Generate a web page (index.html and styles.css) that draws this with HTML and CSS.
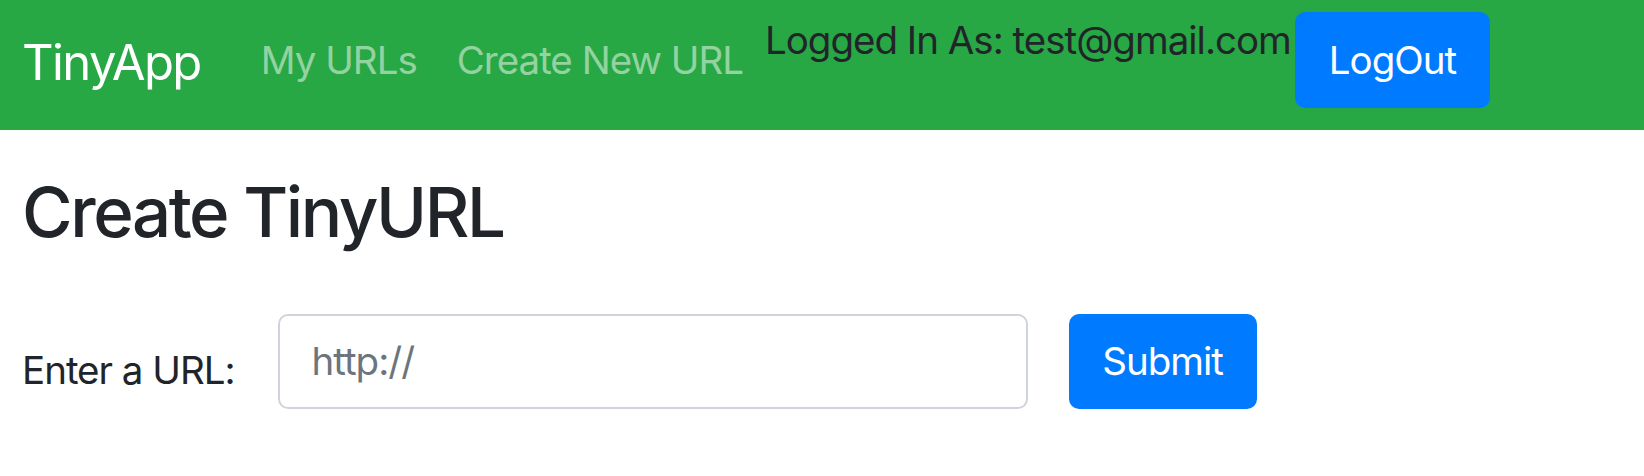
FILE: index.html
```html
<!DOCTYPE html>
<html lang="en">
<head>
<meta charset="utf-8">
<title>TinyApp</title>
<link rel="stylesheet" href="styles.css">
</head>
<body>
<nav class="navbar">
  <a class="brand" href="#">TinyApp</a>
  <ul class="nav-links">
    <li><a class="nav-link" href="#">My URLs</a></li>
    <li><a class="nav-link" href="#">Create New URL</a></li>
  </ul>
  <span class="logged">Logged In As: test@gmail.com</span>
  <button class="btn btn-logout" type="button">LogOut</button>
</nav>
<main class="main">
  <h3 class="title">Create TinyURL</h3>
  <form class="url-form">
    <label class="url-label" for="longURL">Enter a URL:</label>
    <input class="url-input" id="longURL" type="text" placeholder="http://">
    <button class="btn btn-submit" type="button">Submit</button>
  </form>
</main>
</body>
</html>
```

FILE: styles.css
```css
* { box-sizing: border-box; }
html, body { margin: 0; padding: 0; }
body {
  font-family: Inter, "Noto Sans", "Liberation Sans", sans-serif;
  color: #212529;
  background: #fff;
  font-size: 38.5px;
  line-height: 1;
  letter-spacing: -0.026em;
}
.navbar {
  height: 130px;
  background: #28a745;
  display: flex;
  align-items: flex-start;
  padding-left: 22px;
}
.brand {
  font-size: 49px;
  letter-spacing: -0.032em;
  line-height: 1;
  color: #fff;
  text-decoration: none;
  margin-top: 37.7px;
  margin-right: 40px;
}
.nav-links {
  list-style: none;
  margin: 40.7px 0 0 0;
  padding: 0;
  display: flex;
}
.nav-link {
  display: block;
  padding: 0 20px;
  color: rgba(255, 255, 255, 0.5);
  text-decoration: none;
  line-height: 1;
}
.logged {
  margin-top: 20.7px;
  margin-left: 2px;
  color: #212529;
}
.btn {
  font-family: inherit;
  font-size: 38.5px;
  letter-spacing: -0.026em;
  line-height: 1;
  color: #fff;
  background: #007bff;
  border: 0;
  border-radius: 10px;
  cursor: pointer;
}
.btn-logout {
  margin-top: 12px;
  margin-left: 4px;
  height: 96px;
  padding: 0 34px;
}
.main {
  padding-left: 22px;
}
.title {
  font-size: 69px;
  font-weight: 500;
  letter-spacing: -0.035em;
  line-height: 1;
  margin: 48.4px 0 66.6px 0;
}
.url-form {
  display: flex;
  align-items: flex-start;
}
.url-label {
  margin-top: 36.7px;
  margin-right: 43px;
}
.url-input {
  width: 750px;
  height: 95px;
  border: 2px solid #ced4da;
  border-radius: 10px;
  padding: 0 32px;
  font-family: inherit;
  font-size: 38.5px;
  letter-spacing: -0.026em;
  color: #495057;
  outline: none;
}
.url-input::placeholder { color: #6c757d; }
.btn-submit {
  margin-left: 41px;
  width: 188px;
  height: 95px;
  padding: 0;
}
```
